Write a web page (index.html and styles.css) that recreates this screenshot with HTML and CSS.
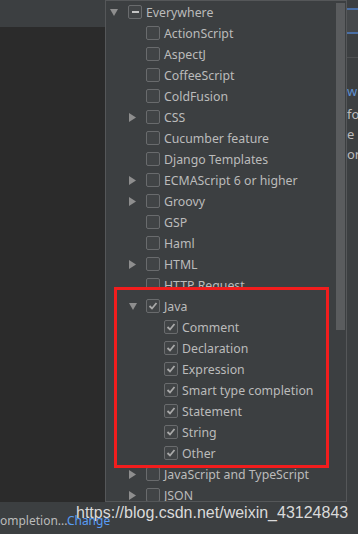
FILE: index.html
```html
<!DOCTYPE html>
<html lang="en">
<head>
    <meta charset="UTF-8">
    <meta name="viewport" content="width=device-width, initial-scale=1.0">
    <title>Completion scope</title>
    <link rel="stylesheet" href="styles.css">
</head>
<body>
    <div class="ide">
        <div class="left">
            <div class="toolbar"></div>
            <div class="editor"></div>
        </div>

        <div class="popup">
            <div class="tree">
                <div class="row l1">
                    <span class="twisty"><svg width="8" height="7" viewBox="0 0 8 7"><polygon points="0,0 8,0 4,7" /></svg></span>
                    <span class="box mixed"></span>
                    <span class="label">Everywhere</span>
                </div>
                <div class="row l2"><span class="twisty"></span><span class="box"></span><span class="label">ActionScript</span></div>
                <div class="row l2"><span class="twisty"></span><span class="box"></span><span class="label">AspectJ</span></div>
                <div class="row l2"><span class="twisty"></span><span class="box"></span><span class="label">CoffeeScript</span></div>
                <div class="row l2"><span class="twisty"></span><span class="box"></span><span class="label">ColdFusion</span></div>
                <div class="row l2">
                    <span class="twisty"><svg width="7" height="9" viewBox="0 0 7 9"><polygon points="0,0 7,4.5 0,9" /></svg></span>
                    <span class="box"></span><span class="label">CSS</span>
                </div>
                <div class="row l2"><span class="twisty"></span><span class="box"></span><span class="label">Cucumber feature</span></div>
                <div class="row l2"><span class="twisty"></span><span class="box"></span><span class="label">Django Templates</span></div>
                <div class="row l2">
                    <span class="twisty"><svg width="7" height="9" viewBox="0 0 7 9"><polygon points="0,0 7,4.5 0,9" /></svg></span>
                    <span class="box"></span><span class="label">ECMAScript 6 or higher</span>
                </div>
                <div class="row l2">
                    <span class="twisty"><svg width="7" height="9" viewBox="0 0 7 9"><polygon points="0,0 7,4.5 0,9" /></svg></span>
                    <span class="box"></span><span class="label">Groovy</span>
                </div>
                <div class="row l2"><span class="twisty"></span><span class="box"></span><span class="label">GSP</span></div>
                <div class="row l2"><span class="twisty"></span><span class="box"></span><span class="label">Haml</span></div>
                <div class="row l2">
                    <span class="twisty"><svg width="7" height="9" viewBox="0 0 7 9"><polygon points="0,0 7,4.5 0,9" /></svg></span>
                    <span class="box"></span><span class="label">HTML</span>
                </div>
                <div class="row l2"><span class="twisty"></span><span class="box"></span><span class="label">HTTP Request</span></div>

                <div class="marked">
                    <div class="row l2">
                        <span class="twisty"><svg width="8" height="7" viewBox="0 0 8 7"><polygon points="0,0 8,0 4,7" /></svg></span>
                        <span class="box checked"><svg width="12" height="12" viewBox="0 0 12 12"><polyline points="2.5,6 5,8.5 9.5,3" /></svg></span>
                        <span class="label">Java</span>
                    </div>
                    <div class="row l3"><span class="twisty"></span><span class="box checked"><svg width="12" height="12" viewBox="0 0 12 12"><polyline points="2.5,6 5,8.5 9.5,3" /></svg></span><span class="label">Comment</span></div>
                    <div class="row l3"><span class="twisty"></span><span class="box checked"><svg width="12" height="12" viewBox="0 0 12 12"><polyline points="2.5,6 5,8.5 9.5,3" /></svg></span><span class="label">Declaration</span></div>
                    <div class="row l3"><span class="twisty"></span><span class="box checked"><svg width="12" height="12" viewBox="0 0 12 12"><polyline points="2.5,6 5,8.5 9.5,3" /></svg></span><span class="label">Expression</span></div>
                    <div class="row l3"><span class="twisty"></span><span class="box checked"><svg width="12" height="12" viewBox="0 0 12 12"><polyline points="2.5,6 5,8.5 9.5,3" /></svg></span><span class="label">Smart type completion</span></div>
                    <div class="row l3"><span class="twisty"></span><span class="box checked"><svg width="12" height="12" viewBox="0 0 12 12"><polyline points="2.5,6 5,8.5 9.5,3" /></svg></span><span class="label">Statement</span></div>
                    <div class="row l3"><span class="twisty"></span><span class="box checked"><svg width="12" height="12" viewBox="0 0 12 12"><polyline points="2.5,6 5,8.5 9.5,3" /></svg></span><span class="label">String</span></div>
                    <div class="row l3"><span class="twisty"></span><span class="box checked"><svg width="12" height="12" viewBox="0 0 12 12"><polyline points="2.5,6 5,8.5 9.5,3" /></svg></span><span class="label">Other</span></div>
                </div>

                <div class="row l2">
                    <span class="twisty"><svg width="7" height="9" viewBox="0 0 7 9"><polygon points="0,0 7,4.5 0,9" /></svg></span>
                    <span class="box"></span><span class="label">JavaScript and TypeScript</span>
                </div>
                <div class="row l2">
                    <span class="twisty"><svg width="7" height="9" viewBox="0 0 7 9"><polygon points="0,0 7,4.5 0,9" /></svg></span>
                    <span class="box"></span><span class="label">JSON</span>
                </div>
            </div>
            <div class="scroll"><div class="thumb"></div></div>
        </div>

        <div class="side">
            <div class="side-tabs"></div>
            <div class="side-text">
                <p class="link">w</p>
                <p>fo</p>
                <p>e <span class="link">:</span></p>
                <p>or</p>
            </div>
        </div>

        <div class="status">
            <span>ompletion...</span><a class="change">Change</a>
        </div>
    </div>

    <div class="watermark">https://blog.csdn.net/weixin_43124843</div>
</body>
</html>
```

FILE: styles.css
```css
body {
    margin: 0;
    width: 358px;
    height: 534px;
    overflow: hidden;
    background-color: #3c3f41;
    font-family: "Noto Sans", "Open Sans", sans-serif;
    font-size: 12.3px;
    color: #bbbbbb;
    position: relative;
}
.ide {
    display: grid;
    grid-template-columns: 105px 242px 11px;
    grid-template-rows: 502px 32px;
    height: 534px;
}
.left {
    display: flex;
    flex-direction: column;
}
.toolbar {
    height: 27px;
    background-color: #3c3f41;
}
.editor {
    flex: 1;
    background-color: #2b2b2b;
}
.popup {
    display: flex;
    background-color: #3c3f41;
    border: 1px solid #555759;
    overflow: hidden;
}
.tree {
    flex: 1;
    padding-top: 1px;
}
.row {
    display: flex;
    align-items: center;
    height: 21px;
    white-space: nowrap;
}
.l1 {
    padding-left: 2px;
}
.l2 {
    padding-left: 20px;
}
.l3 {
    padding-left: 38px;
}
.twisty {
    width: 20px;
    display: flex;
    align-items: center;
    padding-left: 2px;
    box-sizing: border-box;
}
.l2 .twisty {
    padding-left: 3px;
}
.twisty svg {
    fill: #8e8e8e;
}
.box {
    width: 14px;
    height: 14px;
    box-sizing: border-box;
    border: 1px solid #696b6d;
    border-radius: 2px;
    background-color: #414446;
    margin-right: 4px;
    margin-top: -1px;
    display: flex;
    align-items: center;
    justify-content: center;
}
.box.mixed::after {
    content: "";
    width: 7px;
    height: 2px;
    background-color: #c4c4c4;
}
.box.checked svg {
    fill: none;
    stroke: #a9a9a9;
    stroke-width: 1.8;
}
.marked {
    position: relative;
}
.marked::before {
    content: "";
    position: absolute;
    top: -9px;
    bottom: -4px;
    left: 8px;
    width: 215px;
    box-sizing: border-box;
    border: 3px solid #f21d1d;
    background-color: #3c3f41;
    z-index: 1;
}
.marked .row {
    position: relative;
    z-index: 2;
}
.scroll {
    width: 10px;
    padding-top: 2px;
}
.thumb {
    width: 9px;
    height: 327px;
    background-color: #5a5c5e;
}
.side {
    overflow: hidden;
    background-color: #3c3f41;
}
.side-tabs {
    margin-top: 8px;
    height: 22px;
    background-color: #45484a;
    border-top: 2px solid #4a6fa5;
    border-bottom: 2px solid #4a6fa5;
    margin-bottom: 23px;
}
.side-text {
    border-top: 1px solid #4e5052;
    padding-top: 23px;
    font-size: 13px;
    white-space: nowrap;
}
.side-text p {
    margin: 0;
    height: 20px;
    line-height: 20px;
}
.side-text p.link {
    margin-bottom: 3px;
}
.link {
    color: #5e8fcf;
}
.status {
    grid-column: 1 / 4;
    padding-top: 10px;
    font-size: 12px;
    white-space: nowrap;
}
.change {
    color: #589df6;
}
.watermark {
    position: absolute;
    left: 76px;
    top: 504px;
    font-family: "Liberation Sans", Arial, sans-serif;
    font-size: 16px;
    color: #dadada;
    white-space: nowrap;
}
```
